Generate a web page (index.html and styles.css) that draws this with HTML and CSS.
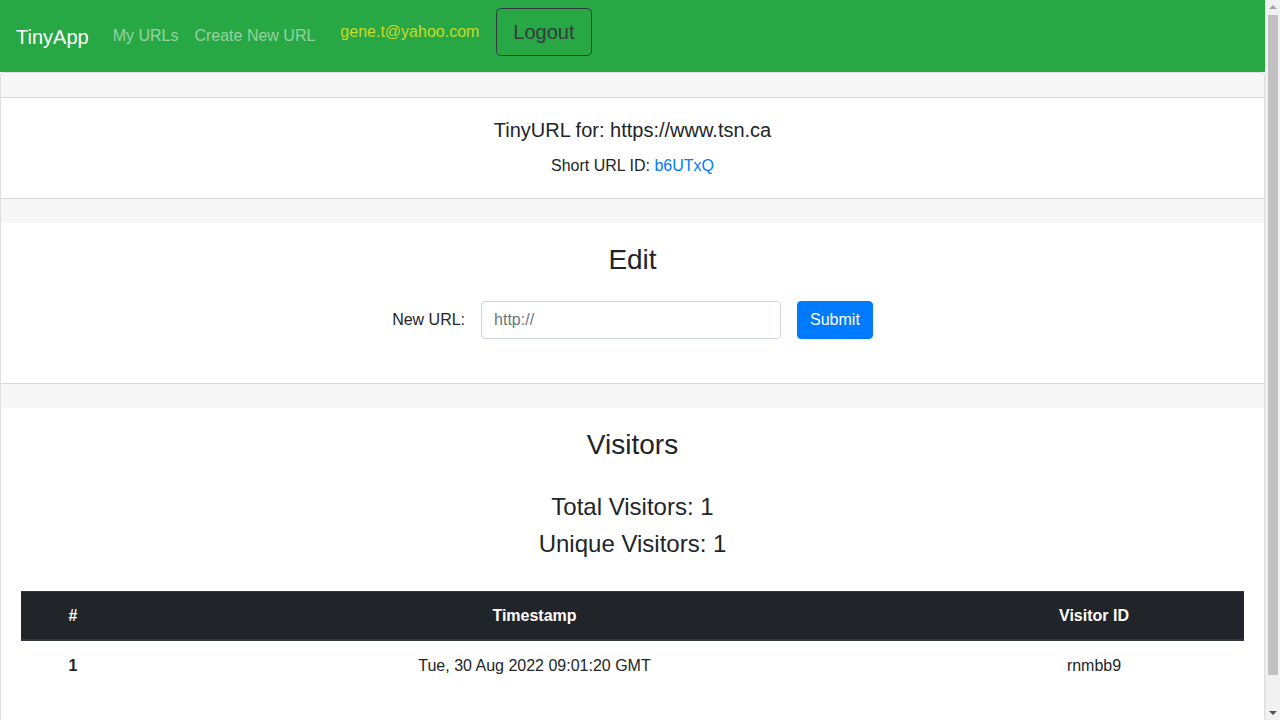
FILE: index.html
```html
<!DOCTYPE html>
<html lang="en">
<head>
<meta charset="utf-8">
<title>TinyApp</title>
<link rel="stylesheet" href="styles.css">
</head>
<body>
<nav class="navbar">
  <a class="brand" href="#">TinyApp</a>
  <div class="nav-links">
    <a class="nav-link" href="#">My URLs</a>
    <a class="nav-link" href="#">Create New URL</a>
  </div>
  <form class="user-form">
    <span class="user-email">gene.t@yahoo.com</span>
    <button type="button" class="btn-logout">Logout</button>
  </form>
</nav>

<main class="card">
  <div class="card-header"></div>
  <section class="card-body summary">
    <h5 class="card-title">TinyURL for: https://www.tsn.ca</h5>
    <p class="card-text">Short URL ID: <a href="#">b6UTxQ</a></p>
  </section>
  <div class="card-footer"></div>
  <section class="card-body edit">
    <h3 class="section-title">Edit</h3>
    <form class="edit-form">
      <label class="edit-label" for="longURL">New URL:</label>
      <input class="form-control" id="longURL" type="text" placeholder="http://">
      <button type="button" class="btn-primary">Submit</button>
    </form>
  </section>
  <div class="card-footer"></div>
  <section class="card-body visitors">
    <h3 class="section-title">Visitors</h3>
    <h4 class="stat first">Total Visitors: 1</h4>
    <h4 class="stat">Unique Visitors: 1</h4>
    <table class="table">
      <thead>
        <tr>
          <th class="col-num">#</th>
          <th class="col-time">Timestamp</th>
          <th class="col-id">Visitor ID</th>
        </tr>
      </thead>
      <tbody>
        <tr>
          <th class="col-num">1</th>
          <td class="col-time">Tue, 30 Aug 2022 09:01:20 GMT</td>
          <td class="col-id">rnmbb9</td>
        </tr>
      </tbody>
    </table>
  </section>
  <div class="card-footer"></div>
</main>

<div class="scrollbar" aria-hidden="true">
  <span class="scroll-arrow up"></span>
  <span class="scroll-thumb"></span>
  <span class="scroll-arrow down"></span>
</div>
</body>
</html>
```

FILE: styles.css
```css
* {
  box-sizing: border-box;
}

body {
  margin: 0 15px 0 0;
  font-family: "Liberation Sans", Arial, sans-serif;
  font-size: 16px;
  line-height: 24px;
  color: #212529;
  background: #fff;
}

a {
  text-decoration: none;
}

/* Navbar */
.navbar {
  display: flex;
  align-items: center;
  height: 72px;
  padding: 8px 16px;
  background: #28a745;
}

.brand {
  color: #fff;
  font-size: 20px;
  line-height: 30px;
  margin-right: 16px;
  margin-top: 1px;
}

.nav-links {
  display: flex;
}

.nav-link {
  color: rgba(255, 255, 255, 0.5);
  padding: 8px;
  line-height: 24px;
  font-size: 16px;
}

.user-form {
  display: flex;
  align-items: center;
  align-self: flex-start;
  margin: 0 0 0 17px;
}

.user-email {
  color: #c8da28;
  margin-top: -1px;
  margin-right: 17px;
}

.btn-logout {
  font-family: inherit;
  font-size: 20px;
  line-height: 30px;
  padding: 8px 16px;
  height: 48px;
  color: #343a40;
  background: transparent;
  border: 1px solid #343a40;
  border-radius: 4.8px;
}

/* Card */
.card {
  display: block;
  border: 1px solid rgba(0, 0, 0, 0.125);
  border-radius: 4px;
  overflow: hidden;
}

.card-header {
  height: 25px;
  background: rgba(0, 0, 0, 0.03);
  border-bottom: 1px solid rgba(0, 0, 0, 0.125);
}

.card-footer {
  height: 25px;
  background: rgba(0, 0, 0, 0.03);
  border-top: 1px solid rgba(0, 0, 0, 0.125);
}

.card-body {
  padding: 20px;
  text-align: center;
}

.card-title {
  margin: 0 0 12px;
  font-size: 20px;
  line-height: 24px;
  font-weight: 400;
}

.card-text {
  margin: 0;
}

.card-text a {
  color: #007bff;
}

.section-title {
  margin: 0;
  font-size: 28px;
  line-height: 34px;
  font-weight: 400;
}

/* Edit */
.card-body.edit {
  padding-bottom: 44px;
}

.edit .section-title {
  margin-bottom: 24px;
}

.edit-form {
  display: flex;
  justify-content: center;
  align-items: center;
  gap: 16px;
}

.edit-label {
  line-height: 24px;
}

.form-control {
  width: 300px;
  height: 38px;
  padding: 6px 12px;
  font-family: inherit;
  font-size: 16px;
  line-height: 24px;
  color: #495057;
  border: 1px solid #ced4da;
  border-radius: 4px;
  background: #fff;
}

.form-control::placeholder {
  color: #6c757d;
}

.btn-primary {
  height: 38px;
  padding: 6px 12px;
  font-family: inherit;
  font-size: 16px;
  line-height: 24px;
  color: #fff;
  background: #007bff;
  border: 1px solid #007bff;
  border-radius: 4px;
}

/* Visitors */
.visitors .section-title {
  margin-bottom: 30px;
}

.stat {
  margin: 0 0 8px;
  font-size: 24px;
  line-height: 29px;
  font-weight: 400;
}

.stat + .stat {
  margin-bottom: 33px;
}

.table {
  width: 100%;
  border-collapse: collapse;
  margin-bottom: 16px;
}

.table th,
.table td {
  padding: 13px 12px 12px;
  line-height: 24px;
  text-align: center;
}

.table thead th {
  background: #212529;
  color: #fff;
  font-weight: 700;
  border-top: 1px solid #32383e;
  border-bottom: 2px solid #32383e;
  padding: 12px 12px 11px;
}

.table tbody th,
.table tbody td {
  border-top: 1px solid #dee2e6;
}

.table tbody th {
  font-weight: 700;
}

.col-num {
  width: 104px;
}

.col-id {
  width: 300px;
}

/* Simulated window scrollbar (overlays the right edge) */
.scrollbar {
  position: fixed;
  top: 0;
  right: 0;
  width: 15px;
  height: 100%;
  background: #f1f1f1;
  border-left: 1px solid #e8e8e8;
}

.scroll-thumb {
  position: absolute;
  top: 15px;
  left: 2px;
  right: 2px;
  bottom: 45px;
  background: #c1c1c1;
}

.scroll-arrow {
  position: absolute;
  left: 3px;
  width: 0;
  height: 0;
  border-left: 4px solid transparent;
  border-right: 4px solid transparent;
}

.scroll-arrow.up {
  top: 5px;
  border-bottom: 4px solid #a3a3a3;
}

.scroll-arrow.down {
  bottom: 5px;
  border-top: 4px solid #505050;
}
```
